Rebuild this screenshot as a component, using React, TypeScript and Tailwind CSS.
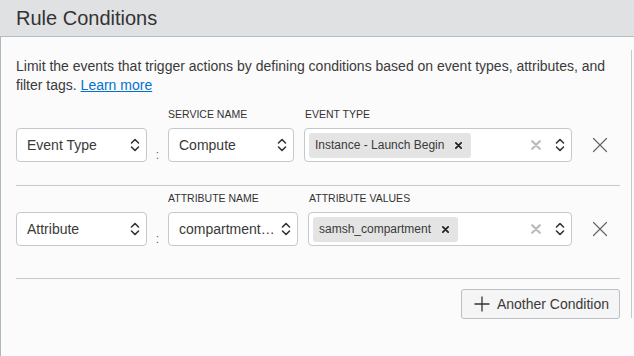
import React from "react"

const font = { fontFamily: '"Liberation Sans", Arial, sans-serif' }

function Chevrons() {
    return (
        <svg width="10" height="16" viewBox="0 0 10 16" fill="none" stroke="#333" strokeWidth="1.6" strokeLinecap="round" strokeLinejoin="round">
            <path d="M1.5 6 L5 2.5 L8.5 6" />
            <path d="M1.5 10 L5 13.5 L8.5 10" />
        </svg>
    )
}

function SmallX({ color = "#333", size = 8, stroke = 2 }: { color?: string; size?: number; stroke?: number }) {
    return (
        <svg width={size} height={size} viewBox="0 0 8 8" fill="none" stroke={color} strokeWidth={stroke} strokeLinecap="round">
            <path d="M1 1 L7 7 M7 1 L1 7" />
        </svg>
    )
}

function RemoveX() {
    return (
        <svg width="16" height="16" viewBox="0 0 16 16" fill="none" stroke="#666" strokeWidth="1.2" strokeLinecap="round">
            <path d="M1.5 1.5 L14.5 14.5 M14.5 1.5 L1.5 14.5" />
        </svg>
    )
}

function Select({ value, className }: { value: string; className: string }) {
    return (
        <div className={`h-[34px] flex items-center justify-between rounded-[4px] border border-[#c3c9cf] bg-white pl-[10px] pr-[6px] ${className}`}>
            <span className="text-[14px] text-[#3a3a3a] truncate">{value}</span>
            <span className="shrink-0 ml-1"><Chevrons /></span>
        </div>
    )
}

function MultiSelect({ chip, className }: { chip: string; className: string }) {
    return (
        <div className={`h-[34px] flex items-center rounded-[4px] border border-[#c3c9cf] bg-white pl-[4px] pr-[6px] ${className}`}>
            <span className="h-[25px] flex items-center gap-[11px] rounded-[3px] bg-[#e4e4e4] pl-[6px] pr-[9px] text-[12px] text-[#3a3a3a]">
                {chip}
                <SmallX color="#222" size={7} stroke={2} />
            </span>
            <span className="ml-auto mr-[14px]"><SmallX color="#bbb" size={10} stroke={1.8} /></span>
            <Chevrons />
        </div>
    )
}

function Label({ text, className }: { text: string; className: string }) {
    return <div className={`h-[14px] mb-[7px] text-[10.5px] leading-[14px] text-[#333] uppercase ${className}`}>{text}</div>
}

function ConditionRow({
    type, nameLabel, name, nameW, valueLabel, value, valueW, className,
}: {
    type: string; nameLabel: string; name: string; nameW: string; valueLabel: string; value: string; valueW: string; className: string
}) {
    return (
        <div className={`flex items-end border-b border-[#c5c9ce] ${className}`}>
            <Select value={type} className="w-[131px]" />
            <div className="w-[21px] h-[34px] flex items-end justify-center text-[12px] leading-[14px] text-[#666]">:</div>
            <div className="flex flex-col">
                <Label text={nameLabel} className="" />
                <Select value={name} className={nameW} />
            </div>
            <div className="flex flex-col ml-[10px]">
                <Label text={valueLabel} className="pl-[1px]" />
                <MultiSelect chip={value} className={valueW} />
            </div>
            <div className="h-[34px] flex-1 flex items-center justify-center pl-[8px]">
                <RemoveX />
            </div>
        </div>
    )
}

export default function App() {
    return (
        <div className="w-[634px] h-[356px] flex flex-col bg-[#fbfbfb] overflow-hidden" style={font}>
            <div className="h-[37px] shrink-0 flex items-center px-[16px] bg-[#dfe1e3] border-b border-[#b5bdc4]">
                <h2 className="text-[20px] text-[#333] leading-none">Rule Conditions</h2>
            </div>
            <div className="flex flex-1 border-l border-[#aeb6be]">
                <div className="w-[604px] ml-[15px] pt-[20px]">
                    <p className="text-[14px] leading-[19px] text-[#3a3a3a]">
                        Limit the events that trigger actions by defining conditions based on event types, attributes, and filter tags.{" "}
                        <a className="text-[#0572ce] underline">Learn more</a>
                    </p>
                    <ConditionRow
                        type="Event Type"
                        nameLabel="Service Name"
                        name="Compute"
                        nameW="w-[126px]"
                        valueLabel="Event Type"
                        value="Instance - Launch Begin"
                        valueW="w-[268px]"
                        className="pt-[12px] pb-[23px]"
                    />
                    <ConditionRow
                        type="Attribute"
                        nameLabel="Attribute Name"
                        name="compartment…"
                        nameW="w-[130px]"
                        valueLabel="Attribute Values"
                        value="samsh_compartment"
                        valueW="w-[264px]"
                        className="pt-[5px] pb-[32px]"
                    />
                    <div className="flex justify-end pt-[10px]">
                        <button className="h-[30px] flex items-center gap-[7px] rounded-[3px] border border-[#b9bfc5] bg-[#f5f5f5] pl-[12px] pr-[10px] text-[14px] text-[#3a3a3a]">
                            <svg width="16" height="16" viewBox="0 0 16 16" fill="none" stroke="#333" strokeWidth="1.3">
                                <path d="M8 0.5 V15.5 M0.5 8 H15.5" />
                            </svg>
                            Another Condition
                        </button>
                    </div>
                </div>
                <div className="w-px bg-[#c8c8c8] ml-[11px] mt-[13px] mb-[38px]" />
            </div>
        </div>
    )
}
